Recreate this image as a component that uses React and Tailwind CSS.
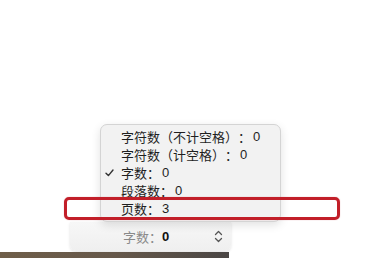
import React from "react";

const items = [
  { label: "字符数（不计空格）：", value: "0" },
  { label: "字符数（计空格）：", value: "0" },
  { label: "字数：", value: "0", checked: true },
  { label: "段落数：", value: "0" },
  { label: "页数：", value: "3" },
];

export default function App() {
  return (
    <div
      className="relative w-[369px] h-[258px] bg-white overflow-hidden flex flex-col justify-end [text-spacing-trim:space-all]"
      style={{ fontFamily: '"Noto Sans CJK SC", "Noto Sans", sans-serif' }}
    >
      {/* status control */}
      <div className="ml-[70px] w-[161px] h-[29px] mb-[1px] rounded-b-[6px] bg-gradient-to-b from-[#f7f7f7] to-[#efefef] shadow-[0_1px_3px_rgba(0,0,0,0.12)] flex items-center">
        <span className="ml-[53px] text-[13px] leading-none text-[#8a8a8a]">字数：</span>
        <span className="text-[13px] leading-none font-bold text-[#111]" style={{ fontFamily: '"Liberation Sans", sans-serif' }}>0</span>
        <svg className="ml-[45px]" width="9" height="13" viewBox="0 0 9 13" fill="none" stroke="#555" strokeWidth="1.3" strokeLinecap="round" strokeLinejoin="round">
          <path d="M1.5 4.5 L4.5 1.5 L7.5 4.5" />
          <path d="M1.5 8.5 L4.5 11.5 L7.5 8.5" />
        </svg>
      </div>
      {/* bottom image strip */}
      <div className="h-[6px] w-[229px] bg-gradient-to-r from-[#6f5e49] via-[#66584a] to-[#4a4644]" />

      {/* popup menu */}
      <div className="absolute left-[100px] top-[124px] w-[181px] h-[98px] rounded-[7px] bg-[#f2f2f2] border border-[#d4d4d4] shadow-[0_3px_10px_rgba(0,0,0,0.12)] pt-[3px]">
        {items.map((it) => (
          <div key={it.label} className="relative h-[18px] flex items-center pl-[20px] text-[13px] text-[#1f1f1f]">
            {it.checked && (
              <svg className="absolute left-[4px] top-[5px]" width="9" height="8" viewBox="0 0 9 8" fill="none" stroke="#333" strokeWidth="1.4" strokeLinecap="round" strokeLinejoin="round">
                <path d="M1 4.2 L3.4 6.6 L8 1" />
              </svg>
            )}
            <span>{it.label}</span>
            <span className="ml-[2px]" style={{ fontFamily: '"Liberation Sans", sans-serif' }}>{it.value}</span>
          </div>
        ))}
      </div>

      {/* annotation highlight */}
      <div className="absolute left-[64px] top-[197px] w-[276px] h-[23px] rounded-[5px] border-[3px] border-[#c21f29] shadow-[0_0_1px_rgba(194,31,41,0.5)]" />
    </div>
  );
}
